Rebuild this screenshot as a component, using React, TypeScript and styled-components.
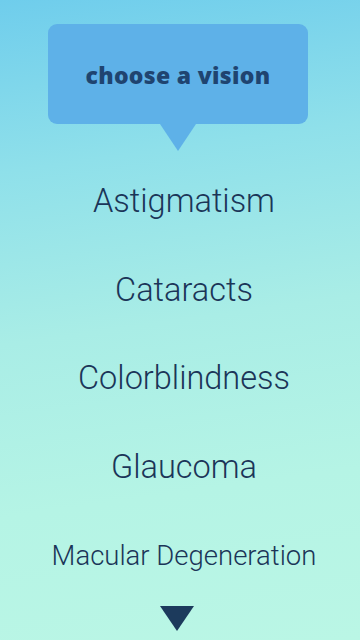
import React from "react";
import styled, { createGlobalStyle } from "styled-components";

const Global = createGlobalStyle`
  html, body { margin: 0; padding: 0; }
  body {
    width: 360px;
    height: 640px;
    overflow: hidden;
    background: linear-gradient(172deg, #6fcdec 0%, #8fe0ea 25%, #a9ede6 50%, #b5f4e5 75%, #baf6e5 100%);
  }
`;

const Page = styled.div`
  width: 360px;
  height: 640px;
  display: flex;
  flex-direction: column;
  align-items: center;
  padding-top: 24px;
  box-sizing: border-box;
`;

const Bubble = styled.div`
  position: relative;
  width: 260px;
  height: 100px;
  margin-right: 4px;
  background: #5eb1e8;
  border-radius: 9px;
  display: flex;
  align-items: center;
  justify-content: center;
  &::after {
    content: "";
    position: absolute;
    left: 50%;
    top: 100%;
    transform: translateX(-50%);
    border-left: 18px solid transparent;
    border-right: 18px solid transparent;
    border-top: 27px solid #5eb1e8;
  }
`;

const Title = styled.h1`
  margin: 2px 0 0 0;
  font-family: "Open Sans", sans-serif;
  font-weight: 800;
  font-size: 23px;
  color: #1f4470;
  letter-spacing: 0.3px;
`;

const List = styled.ul`
  list-style: none;
  margin: 33px 0 0 0;
  padding: 0 0 0 8px;
  display: flex;
  flex-direction: column;
  align-items: center;
`;

const Item = styled.li<{ $small?: boolean }>`
  height: 88.5px;
  display: flex;
  align-items: center;
  justify-content: center;
  font-family: Roboto, sans-serif;
  font-weight: 300;
  font-size: ${(p) => (p.$small ? "27.5px" : "32.5px")};
  color: #1b3558;
  white-space: nowrap;
`;

const DownArrow = styled.div`
  margin-top: 6px;
  margin-right: 6px;
  width: 0;
  height: 0;
  border-left: 17px solid transparent;
  border-right: 17px solid transparent;
  border-top: 25px solid #1c3a5c;
`;

const items = ["Astigmatism", "Cataracts", "Colorblindness", "Glaucoma"];

export default function App() {
  return (
    <>
      <Global />
      <Page>
        <Bubble>
          <Title>choose a vision</Title>
        </Bubble>
        <List>
          {items.map((t) => (
            <Item key={t}>{t}</Item>
          ))}
          <Item $small>Macular Degeneration</Item>
        </List>
        <DownArrow />
      </Page>
    </>
  );
}
